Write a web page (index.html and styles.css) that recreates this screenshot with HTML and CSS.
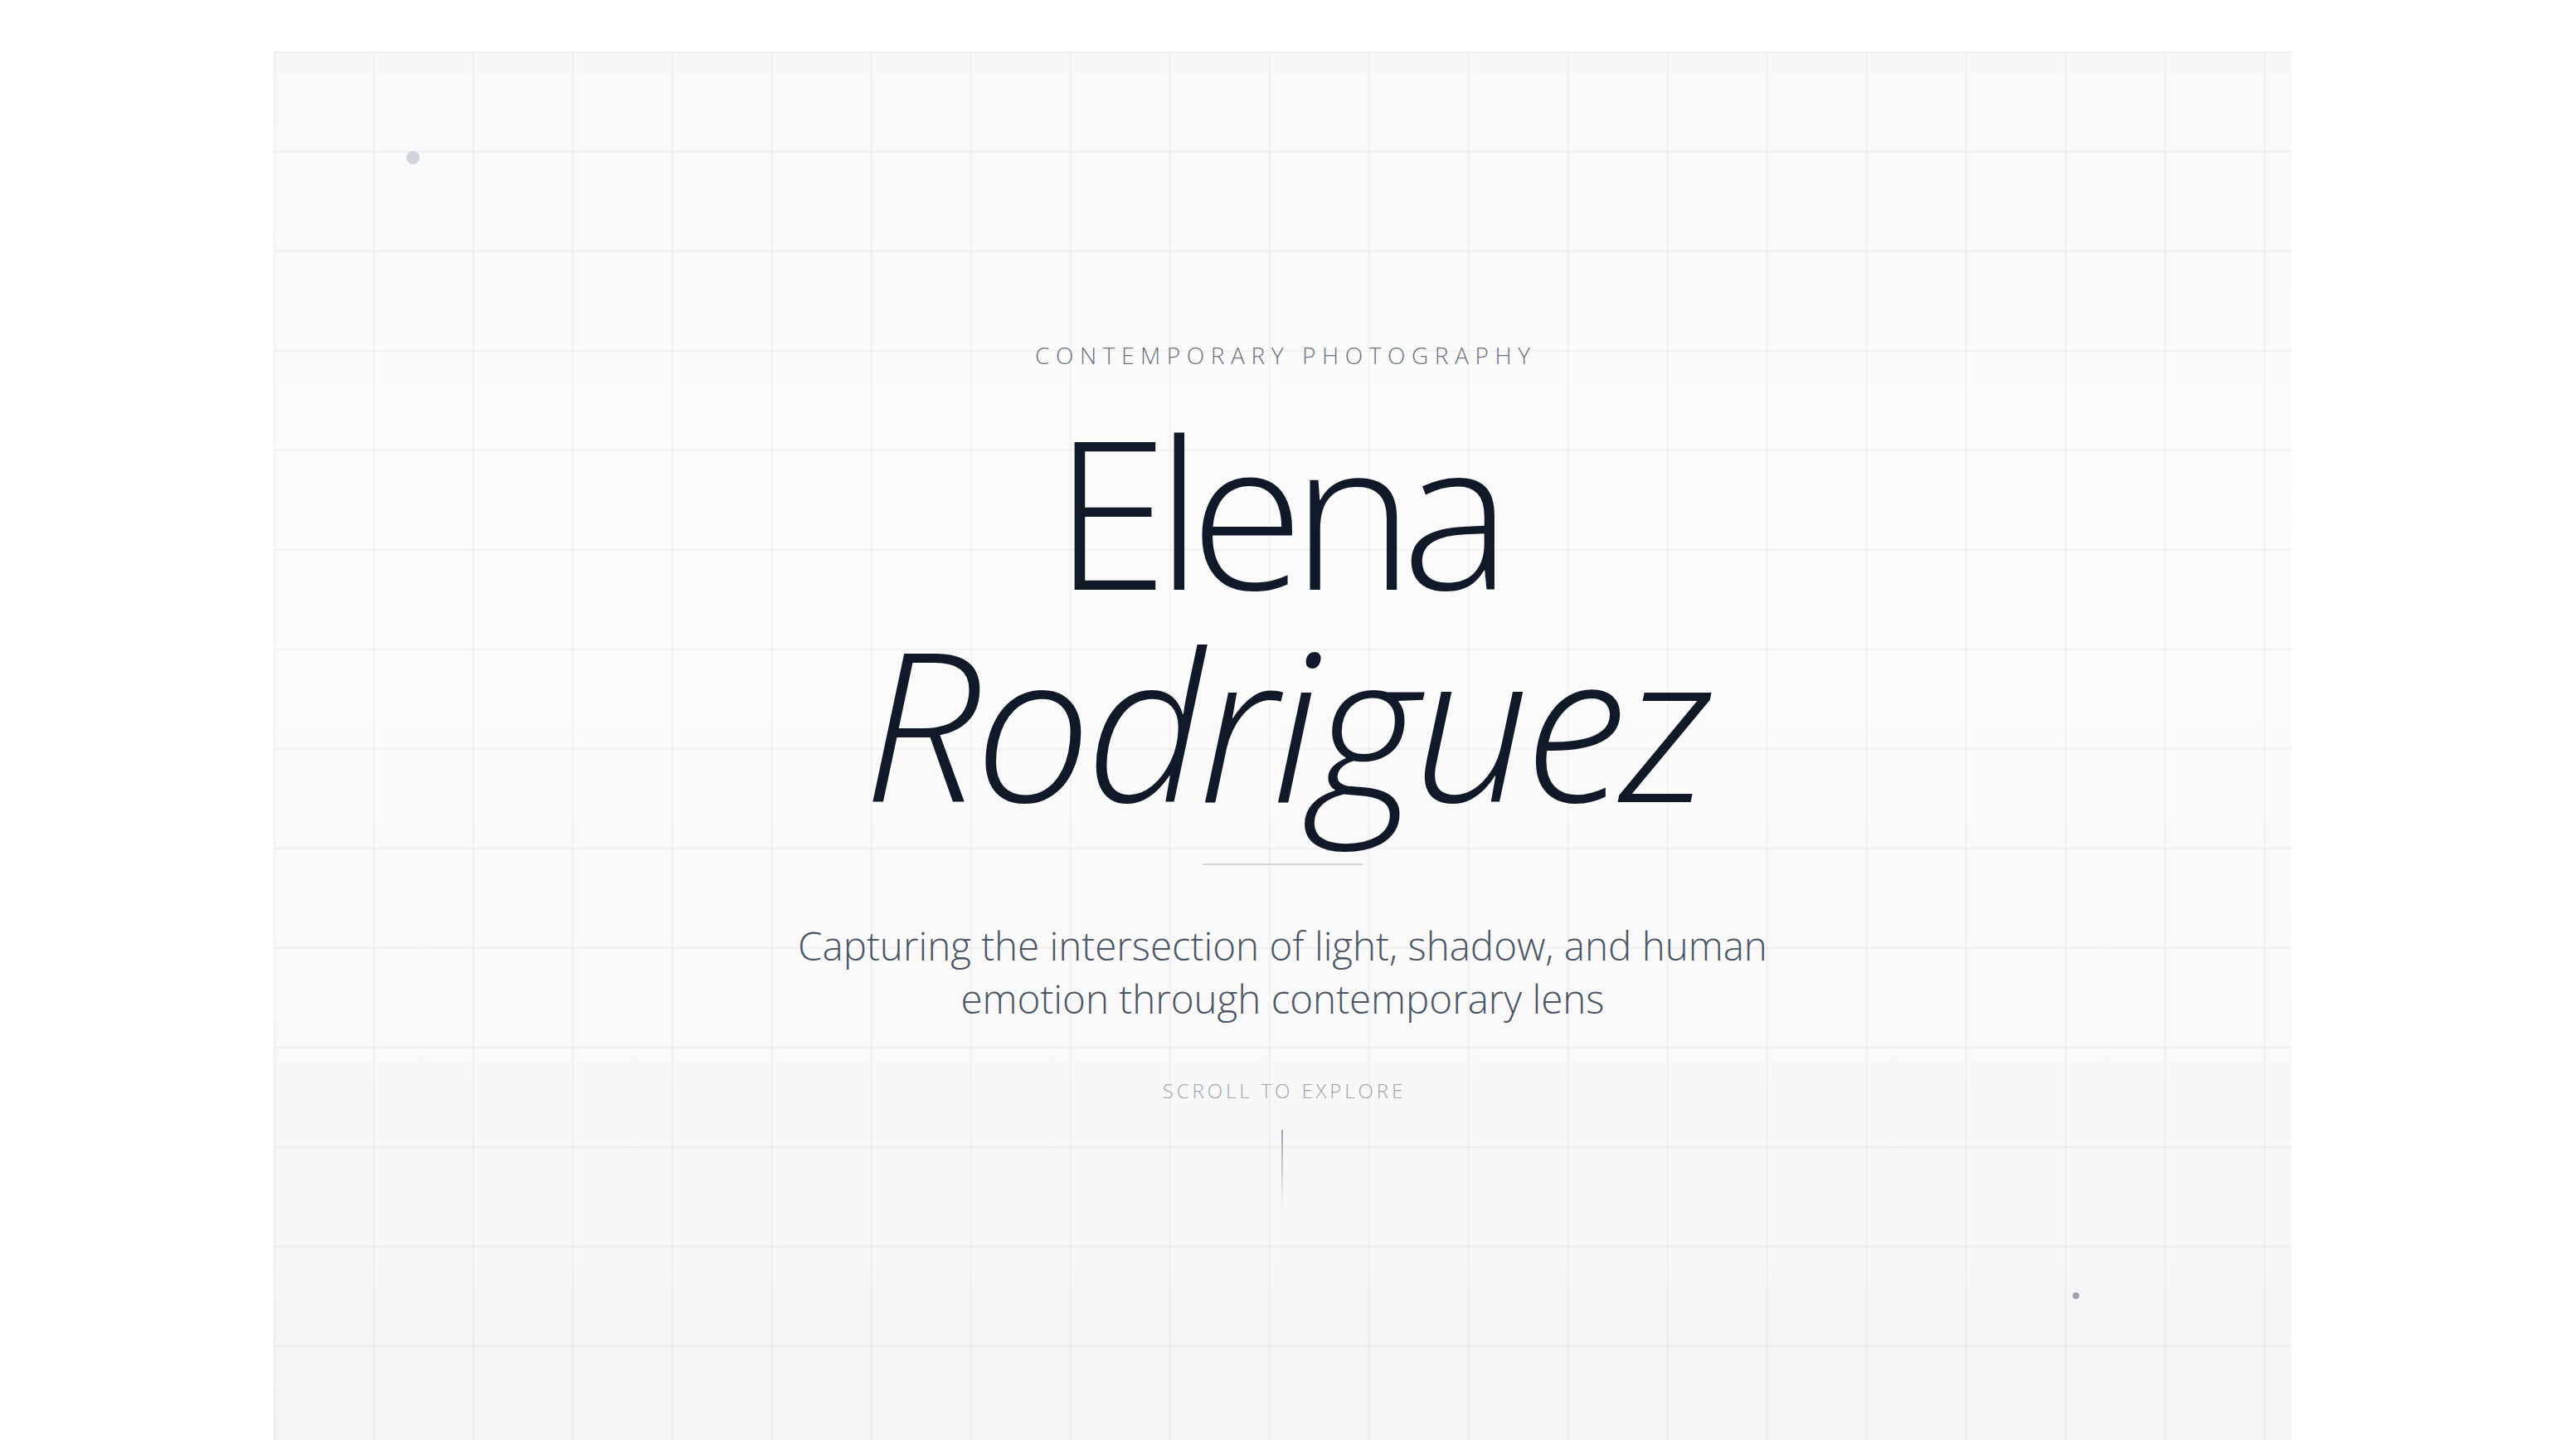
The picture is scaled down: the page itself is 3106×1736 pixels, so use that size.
FILE: index.html
```html
<!DOCTYPE html>
<html lang="en">
<head>
<meta charset="utf-8">
<title>Elena Rodriguez — Contemporary Photography</title>
<link rel="stylesheet" href="styles.css">
</head>
<body>
<main class="site">
  <section class="hero">
    <span class="dot dot-large"></span>
    <span class="dot dot-small"></span>
    <div class="hero-content">
      <p class="eyebrow">Contemporary Photography</p>
      <h1 class="name">
        <span class="name-first">Elena</span>
        <span class="name-last">Rodriguez</span>
      </h1>
      <div class="divider"></div>
      <p class="tagline">Capturing the intersection of light, shadow, and human emotion through contemporary lens</p>
      <div class="scroll">
        <span class="scroll-label">Scroll to explore</span>
        <span class="scroll-line"></span>
      </div>
    </div>
  </section>
  <section class="below"></section>
</main>
</body>
</html>
```
FILE: styles.css
```css
html {
  background: #ffffff;
}
::-webkit-scrollbar {
  width: 6px;
}
::-webkit-scrollbar-track {
  background: #f9fafb;
}
::-webkit-scrollbar-thumb {
  background: #d1d5db;
  border-radius: 3px;
}
body {
  margin: 0;
  font-family: "Open Sans", "Noto Sans", sans-serif;
  font-weight: 300;
  color: #111827;
}
.site {
  padding: 62px 0 0 330px;
}
.hero {
  position: relative;
  width: 2433px;
  height: 1800px;
  background-color: #f8f9fa;
  background-image:
    linear-gradient(to right, rgba(0, 0, 0, 0.032) 2px, transparent 2px),
    linear-gradient(to bottom, rgba(0, 0, 0, 0.032) 2px, transparent 2px),
    linear-gradient(to bottom, #f7f8fa 0, #fbfbfb 500px, #fafafa 1000px, #f3f4f6 1680px);
  background-size: 120px 120px, 120px 120px, 100% 100%;
}
.dot {
  position: absolute;
  border-radius: 50%;
}
.dot-large {
  left: 160px;
  top: 120px;
  width: 16px;
  height: 16px;
  background: #d1d5db;
}
.dot-small {
  left: 2169px;
  top: 1496px;
  width: 8px;
  height: 8px;
  background: #9ca3af;
}
.hero-content {
  display: flex;
  flex-direction: column;
  align-items: center;
  text-align: center;
  padding-top: 346px;
}
.eyebrow {
  margin: 0;
  font-size: 28px;
  line-height: 40px;
  letter-spacing: 7.6px;
  margin-right: -7.6px;
  text-transform: uppercase;
  color: #6b7280;
}
.name {
  margin: 38px 0 0;
  font-weight: 300;
  font-size: 250px;
  line-height: 256px;
  display: flex;
  flex-direction: column;
  align-items: center;
  color: #111827;
}
.name-first {
  letter-spacing: -15px;
  margin-right: 15px;
}
.name-last {
  font-style: italic;
  letter-spacing: -7px;
  margin-right: -5px;
}
.divider {
  margin-top: 43px;
  width: 193px;
  height: 2px;
  background: #d1d5db;
}
.tagline {
  margin: 65px 0 0;
  max-width: 1240px;
  font-size: 47.5px;
  line-height: 64px;
  color: #4b5563;
}
.scroll {
  margin-top: 63px;
  display: flex;
  flex-direction: column;
  align-items: center;
}
.scroll-label {
  font-size: 24px;
  line-height: 32px;
  letter-spacing: 3.9px;
  margin-right: -3.9px;
  text-transform: uppercase;
  color: #9ca3af;
}
.scroll-line {
  margin-top: 31px;
  width: 2px;
  height: 95px;
  background: linear-gradient(to bottom, #9ca3af, rgba(156, 163, 175, 0));
}
.below {
  height: 11240px;
}
```
